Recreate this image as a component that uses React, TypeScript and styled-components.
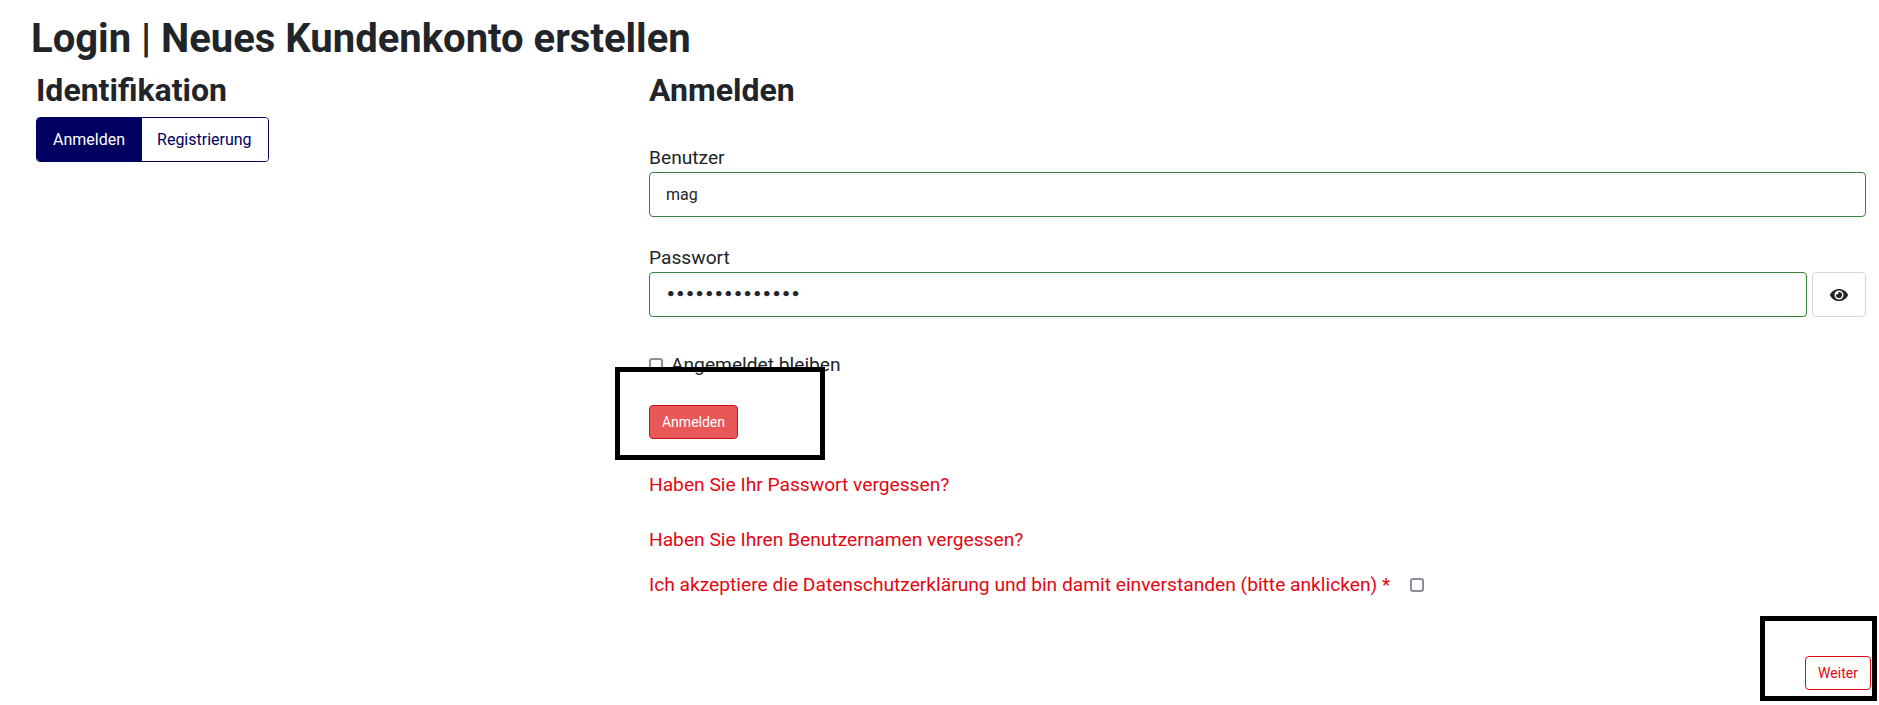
import React from 'react';
import styled, { createGlobalStyle } from 'styled-components';
import { FaEye } from 'react-icons/fa';

const navy = '#000060';
const red = '#e30613';
const green = '#3b8138';
const ink = '#212529';

const GlobalStyle = createGlobalStyle`
  html, body {
    margin: 0;
    padding: 0;
    background: #fff;
    color: ${ink};
    font-family: Roboto, "Liberation Sans", sans-serif;
    font-size: 19.2px;
  }
  * { box-sizing: border-box; }
`;

const Page = styled.div`
  position: relative;
  width: 1879px;
  height: 705px;
  padding: 15px 13px 0 31px;
  overflow: hidden;
`;

const Title = styled.h1`
  margin: 0 0 8px;
  font-size: 40px;
  line-height: 48px;
  font-weight: 700;
`;

const Columns = styled.div`
  display: grid;
  grid-template-columns: 613px 1fr;
  padding-left: 5px;
`;

const Heading = styled.h2`
  margin: 0;
  font-size: 32px;
  line-height: 38px;
  font-weight: 700;
`;

const Tabs = styled.div`
  display: inline-flex;
  margin-top: 8px;
  height: 45px;
  border: 1px solid ${navy};
  border-radius: 4px;
  overflow: hidden;
`;

const Tab = styled.button<{ $active?: boolean }>`
  border: 0;
  padding: 0 ${(p) => (p.$active ? '17px' : '16px')} 0 ${(p) => (p.$active ? '16px' : '15px')};
  font: 400 16px Roboto, sans-serif;
  color: ${(p) => (p.$active ? '#fff' : navy)};
  background: ${(p) => (p.$active ? navy : '#fff')};
`;

const Field = styled.div<{ $top: number }>`
  margin-top: ${(p) => p.$top}px;
`;

const Label = styled.label`
  display: block;
  font-size: 19.2px;
  line-height: 29px;
`;

const InputRow = styled.div`
  display: flex;
  gap: 5px;
`;

const Input = styled.input`
  flex: 1;
  min-width: 0;
  height: 45px;
  padding: 0 16px;
  border: 1px solid ${green};
  border-radius: 4px;
  outline: none;
  font: 400 16px Roboto, sans-serif;
  color: ${ink};
  &[type='password'] {
    font-family: 'DejaVu Sans', sans-serif;
    font-size: 16.3px;
    -webkit-text-stroke: 0.7px ${ink};
  }
`;

const EyeButton = styled.button`
  display: flex;
  align-items: center;
  justify-content: center;
  width: 54px;
  height: 45px;
  padding: 0;
  background: #fff;
  border: 1px solid #d5d9df;
  border-radius: 4px;
  color: ${ink};
  font-size: 18px;
`;

const CheckRow = styled.label`
  display: flex;
  align-items: center;
  gap: 8px;
  margin-top: 33px;
  font-size: 19.2px;
  line-height: 29px;
`;

const Box = styled.input.attrs({ type: 'checkbox' })`
  appearance: none;
  width: 14px;
  height: 14px;
  margin: 0;
  flex: none;
  background: #fff;
  border: 2px solid #8b8f9c;
  border-radius: 3px;
`;

const Submit = styled.button`
  display: block;
  margin-top: 26px;
  width: 89px;
  height: 34px;
  padding: 0;
  font: 400 14px Roboto, sans-serif;
  color: #fff;
  background: #e95858;
  border: 1px solid #c9101a;
  border-radius: 4px;
`;

const HelpLink = styled.a<{ $top: number }>`
  display: block;
  margin-top: ${(p) => p.$top}px;
  font-size: 19.2px;
  line-height: 29px;
  color: ${red};
  text-decoration: none;
`;

const Consent = styled.label`
  display: flex;
  align-items: center;
  gap: 20px;
  margin-top: 16px;
  font-size: 19.2px;
  line-height: 29px;
  color: ${red};
`;

const Footer = styled.div`
  display: flex;
  justify-content: flex-end;
  margin: 57px -5px 0 0;
`;

const NextButton = styled.button`
  width: 66px;
  height: 34px;
  padding: 0;
  font: 400 14px Roboto, sans-serif;
  color: ${red};
  background: #fff;
  border: 1px solid ${red};
  border-radius: 4px;
`;

/* black marker rectangles drawn on top of the screenshot */
const Marker = styled.div<{ $x: number; $y: number; $w: number; $h: number }>`
  position: absolute;
  left: ${(p) => p.$x}px;
  top: ${(p) => p.$y}px;
  width: ${(p) => p.$w}px;
  height: ${(p) => p.$h}px;
  border: 5px solid #000;
  pointer-events: none;
`;

export default function App() {
  return (
    <Page>
      <GlobalStyle />
      <Title>Login | Neues Kundenkonto erstellen</Title>
      <Columns>
        <div>
          <Heading>Identifikation</Heading>
          <Tabs>
            <Tab $active>Anmelden</Tab>
            <Tab>Registrierung</Tab>
          </Tabs>
        </div>
        <div>
          <Heading>Anmelden</Heading>
          <Field $top={34}>
            <Label>Benutzer</Label>
            <InputRow>
              <Input defaultValue="mag" readOnly />
            </InputRow>
          </Field>
          <Field $top={26}>
            <Label>Passwort</Label>
            <InputRow>
              <Input type="password" defaultValue="magmagmagmagma" readOnly />
              <EyeButton aria-label="Passwort anzeigen">
                <FaEye />
              </EyeButton>
            </InputRow>
          </Field>
          <CheckRow>
            <Box />
            Angemeldet bleiben
          </CheckRow>
          <Submit>Anmelden</Submit>
          <HelpLink $top={31}>Haben Sie Ihr Passwort vergessen?</HelpLink>
          <HelpLink $top={26}>Haben Sie Ihren Benutzernamen vergessen?</HelpLink>
          <Consent>
            Ich akzeptiere die Datenschutzerklärung und bin damit einverstanden (bitte anklicken) *
            <Box />
          </Consent>
          <Footer>
            <NextButton>Weiter</NextButton>
          </Footer>
        </div>
      </Columns>
      <Marker $x={615} $y={367} $w={210} $h={93} />
      <Marker $x={1760} $y={616} $w={117} $h={85} />
    </Page>
  );
}
